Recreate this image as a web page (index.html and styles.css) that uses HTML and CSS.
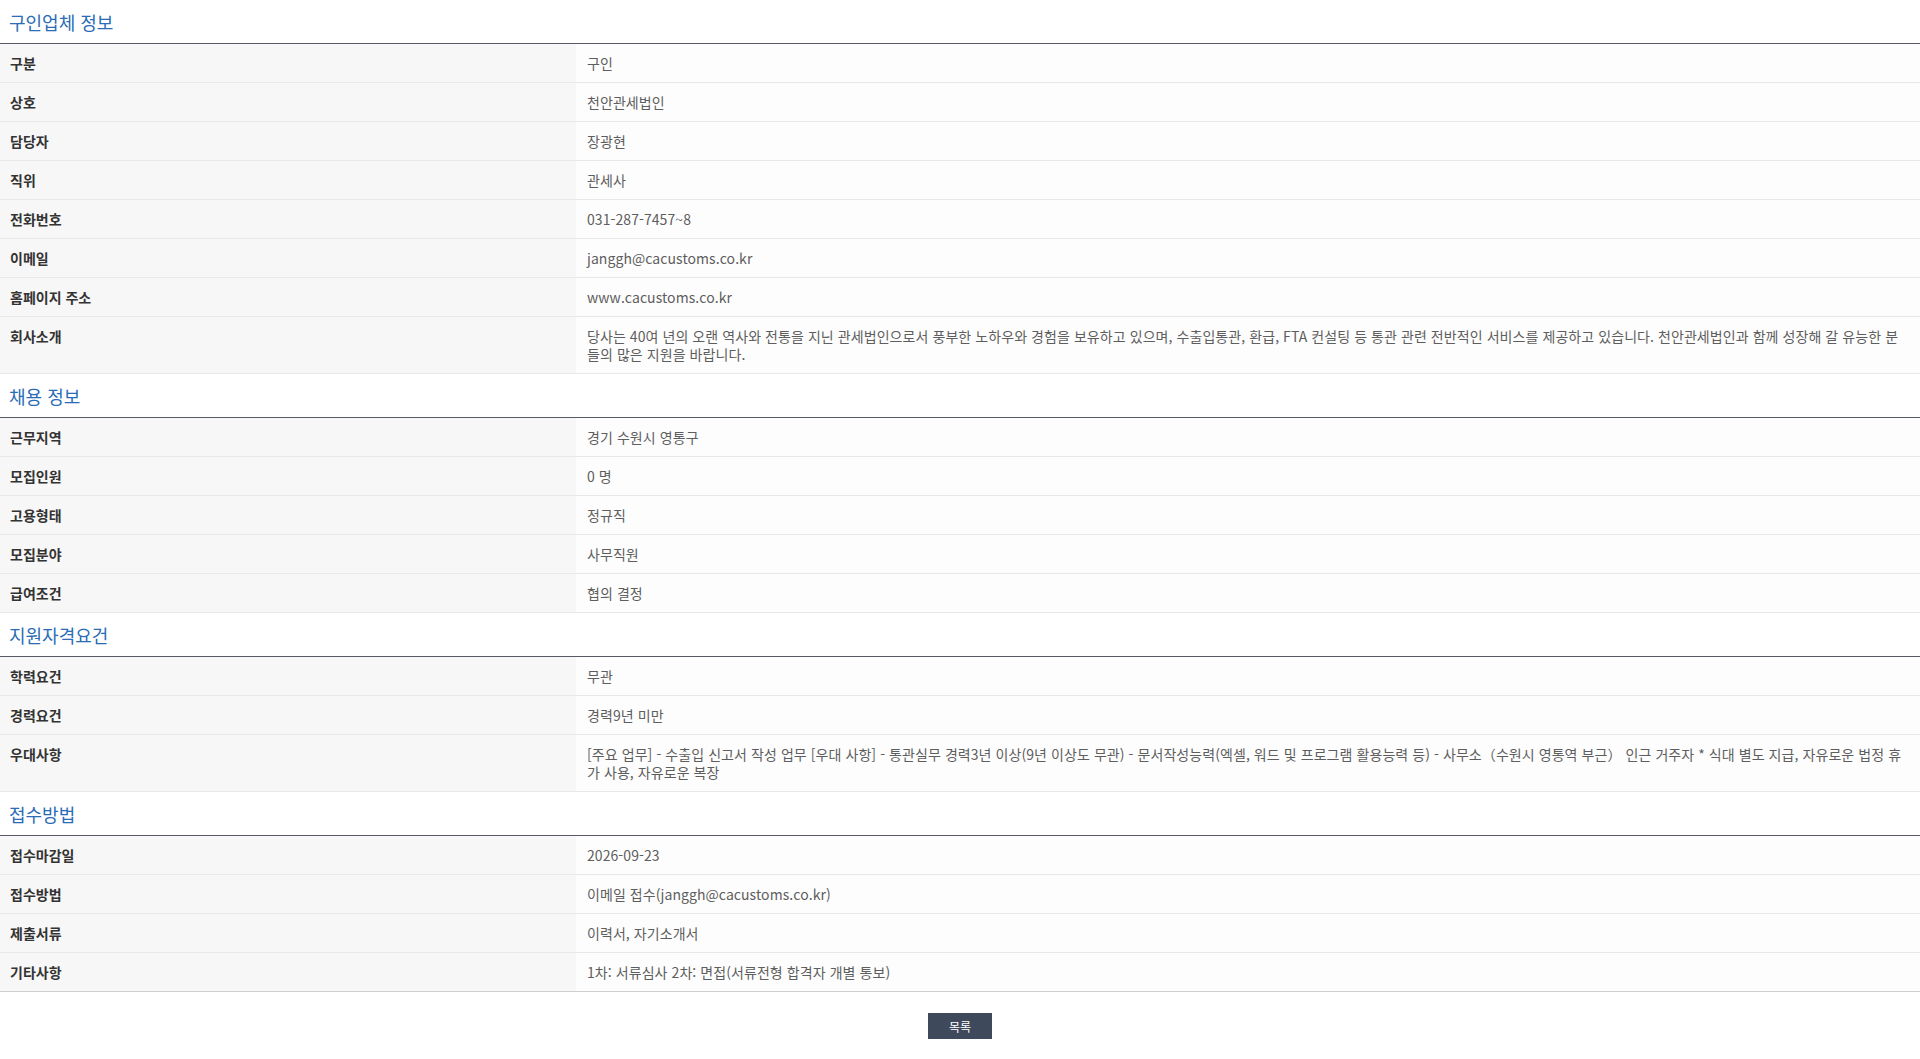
FILE: index.html
```html
<!DOCTYPE html>
<html lang="ko">
<head>
<meta charset="utf-8">
<title>구인 정보</title>
<link rel="stylesheet" href="styles.css">
</head>
<body>
<div class="page">
  <section class="block">
    <h3 class="block-title">구인업체 정보</h3>
    <table class="info">
      <colgroup><col class="c-label"><col></colgroup>
      <tr><th>구분</th><td>구인</td></tr>
      <tr><th>상호</th><td>천안관세법인</td></tr>
      <tr><th>담당자</th><td>장광현</td></tr>
      <tr><th>직위</th><td>관세사</td></tr>
      <tr><th>전화번호</th><td>031-287-7457~8</td></tr>
      <tr><th>이메일</th><td>janggh@cacustoms.co.kr</td></tr>
      <tr><th>홈페이지 주소</th><td>www.cacustoms.co.kr</td></tr>
      <tr><th>회사소개</th><td>당사는 40여 년의 오랜 역사와 전통을 지닌 관세법인으로서 풍부한 노하우와 경험을 보유하고 있으며, 수출입통관, 환급, FTA 컨설팅 등 통관 관련 전반적인 서비스를 제공하고 있습니다. 천안관세법인과 함께 성장해 갈 유능한 분들의 많은 지원을 바랍니다.</td></tr>
    </table>
  </section>
  <section class="block">
    <h3 class="block-title">채용 정보</h3>
    <table class="info">
      <colgroup><col class="c-label"><col></colgroup>
      <tr><th>근무지역</th><td>경기 수원시 영통구</td></tr>
      <tr><th>모집인원</th><td>0 명</td></tr>
      <tr><th>고용형태</th><td>정규직</td></tr>
      <tr><th>모집분야</th><td>사무직원</td></tr>
      <tr><th>급여조건</th><td>협의 결정</td></tr>
    </table>
  </section>
  <section class="block">
    <h3 class="block-title">지원자격요건</h3>
    <table class="info">
      <colgroup><col class="c-label"><col></colgroup>
      <tr><th>학력요건</th><td>무관</td></tr>
      <tr><th>경력요건</th><td>경력9년 미만</td></tr>
      <tr><th>우대사항</th><td>[주요 업무] - 수출입 신고서 작성 업무 [우대 사항] - 통관실무 경력3년 이상(9년 이상도 무관) - 문서작성능력(엑셀, 워드 및 프로그램 활용능력 등) - 사무소（수원시 영통역 부근） 인근 거주자 * 식대 별도 지급, 자유로운 법정 휴가 사용, 자유로운 복장</td></tr>
    </table>
  </section>
  <section class="block">
    <h3 class="block-title">접수방법</h3>
    <table class="info info-last">
      <colgroup><col class="c-label"><col></colgroup>
      <tr><th>접수마감일</th><td>2026-09-23</td></tr>
      <tr><th>접수방법</th><td>이메일 접수(janggh@cacustoms.co.kr)</td></tr>
      <tr><th>제출서류</th><td>이력서, 자기소개서</td></tr>
      <tr><th>기타사항</th><td>1차: 서류심사 2차: 면접(서류전형 합격자 개별 통보)</td></tr>
    </table>
  </section>
  <div class="actions">
    <button type="button" class="btn-list">목록</button>
  </div>
</div>
</body>
</html>
```

FILE: styles.css
```css
html, body {
  margin: 0;
  padding: 0;
  background: #ffffff;
}
body {
  font-family: "Noto Sans CJK KR", "Noto Sans", sans-serif;
  font-size: 14px;
  color: #555;
}
.page {
  width: 100%;
}
.block-title {
  margin: 0;
  height: 43px;
  line-height: 45px;
  padding-left: 9px;
  font-size: 18px;
  font-weight: 400;
  color: #2a6cb6;
}
.info {
  width: 100%;
  border-collapse: collapse;
  border-top: 1px solid #555a64;
  table-layout: fixed;
}
.c-label {
  width: 576px;
}
.info th,
.info td {
  border-bottom: 1px solid #e8e8e8;
  padding: 10px 14px 10px 11px;
  line-height: 18px;
  vertical-align: top;
  text-align: left;
}
.info th {
  background: #f7f7f7;
  font-weight: 700;
  color: #333;
  padding-left: 10px;
  font-size: 14px;
}
.info td {
  background: #fdfdfd;
  color: #5e5e5e;
  letter-spacing: 0.07px;
}
.info-last tr:last-child th,
.info-last tr:last-child td {
  border-bottom: 1px solid #cfcfcf;
}
.actions {
  display: flex;
  justify-content: center;
  padding-top: 21px;
}
.btn-list {
  width: 64px;
  height: 26px;
  border: 0;
  background: #3e4a5c;
  color: #fff;
  font-family: "Noto Sans CJK KR", sans-serif;
  font-size: 12px;
  padding: 0;
}
```
